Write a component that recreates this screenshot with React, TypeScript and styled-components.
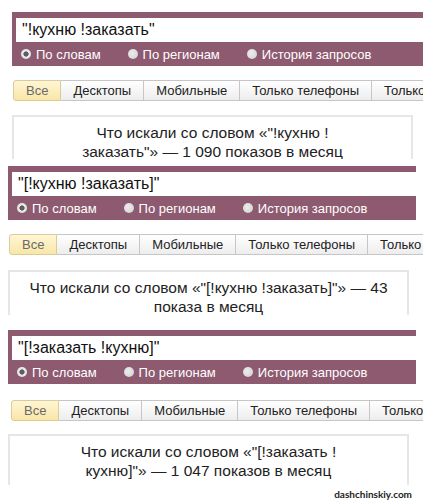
import styled, { createGlobalStyle } from "styled-components";

const GlobalStyle = createGlobalStyle`
  html, body {
    margin: 0;
    padding: 0;
    background: #fff;
  }
  body {
    font-family: "Liberation Sans", Arial, sans-serif;
    width: 423px;
    height: 501px;
    overflow: hidden;
  }
`;

type ShotData = {
  query: string;
  line1: string;
  line2: string;
  top: number;
  left: number;
  height: number;
  barWidth: number;
  tabsLeft: number;
  barBottomGap: number;
  tabsBottomGap: number;
};

const shots: ShotData[] = [
  {
    query: '"!кухню !заказать"',
    line1: "Что искали со словом «\"!кухню !",
    line2: "заказать\"» — 1 090 показов в месяц",
    top: 12,
    left: 12,
    height: 147,
    barWidth: 420,
    tabsLeft: 1,
    barBottomGap: 14,
    tabsBottomGap: 14,
  },
  {
    query: '"[!кухню !заказать]"',
    line1: "Что искали со словом «\"[!кухню !заказать]\"» — 43",
    line2: "показа в месяц",
    top: 7,
    left: 8,
    height: 149,
    barWidth: 408,
    tabsLeft: 1,
    barBottomGap: 14,
    tabsBottomGap: 15,
  },
  {
    query: '"[!заказать !кухню]"',
    line1: "Что искали со словом «\"[!заказать !",
    line2: "кухню]\"» — 1 047 показов в месяц",
    top: 15,
    left: 8,
    height: 155,
    barWidth: 408,
    tabsLeft: 3,
    barBottomGap: 16,
    tabsBottomGap: 13,
  },
];

const tabs = ["Все", "Десктопы", "Мобильные", "Только телефоны", "Только планшеты"];
const modes = ["По словам", "По регионам", "История запросов"];

const App = () => {
  return (
    <>
      <GlobalStyle />
      <Page>
        {shots.map((s) => (
          <Shot
            key={s.query}
            $top={s.top}
            $left={s.left}
            $height={s.height}
          >
            <SearchBar $width={s.barWidth}>
              <QueryField>{s.query}</QueryField>
              <Modes>
                {modes.map((m, i) => (
                  <Mode key={m}>
                    <Radio $checked={i === 0} />
                    {m}
                  </Mode>
                ))}
              </Modes>
            </SearchBar>
            <Tabs $left={s.tabsLeft} $top={s.barBottomGap} $bottom={s.tabsBottomGap}>
              {tabs.map((t, i) => (
                <Tab key={t} $active={i === 0}>
                  {t}
                </Tab>
              ))}
            </Tabs>
            <ResultBox>
              <p>{s.line1}</p>
              <p>{s.line2}</p>
            </ResultBox>
          </Shot>
        ))}
        <Watermark>dashchinskiy.com</Watermark>
      </Page>
    </>
  );
};

const Page = styled.div`
  width: 423px;
  height: 501px;
  display: flex;
  flex-direction: column;
  overflow: hidden;
`;

const Shot = styled.section<{ $top: number; $left: number; $height: number }>`
  margin-top: ${(p) => p.$top}px;
  padding-left: ${(p) => p.$left}px;
  height: ${(p) => p.$height}px;
  width: ${(p) => 423 - p.$left}px;
  overflow: hidden;
  flex-shrink: 0;
  display: flex;
  flex-direction: column;
`;

const SearchBar = styled.div<{ $width: number }>`
  background: #8e5a6f;
  width: ${(p) => p.$width}px;
  padding: 6px 0 0 4px;
  box-sizing: border-box;
  height: 54px;
  flex-shrink: 0;
`;

const QueryField = styled.div`
  background: #fff;
  height: 24px;
  line-height: 24px;
  font-size: 16px;
  color: #111;
  padding-left: 6px;
  white-space: nowrap;
`;

const Modes = styled.div`
  display: flex;
  align-items: center;
  height: 24px;
  padding-left: 5px;
  gap: 27px;
`;

const Mode = styled.span`
  display: inline-flex;
  align-items: center;
  gap: 5px;
  color: #fff;
  font-size: 13px;
  white-space: nowrap;
`;

const Radio = styled.span<{ $checked: boolean }>`
  width: 10px;
  height: 10px;
  border-radius: 50%;
  box-sizing: border-box;
  background: ${(p) =>
    p.$checked
      ? "radial-gradient(circle, #5e5e5e 0 2.3px, #e6e6e6 2.9px)"
      : "radial-gradient(circle at 40% 40%, #ececec, #d0d0d0)"};
  flex-shrink: 0;
`;

const Tabs = styled.div<{ $left: number; $top: number; $bottom: number }>`
  display: flex;
  margin: ${(p) => p.$top}px 0 ${(p) => p.$bottom}px ${(p) => p.$left}px;
  height: 21px;
  flex-shrink: 0;
`;

const Tab = styled.div<{ $active: boolean }>`
  flex-shrink: 0;
  height: 21px;
  box-sizing: border-box;
  padding: 0 12px;
  line-height: 19px;
  font-size: 13px;
  white-space: nowrap;
  color: ${(p) => (p.$active ? "#6a6a6a" : "#222")};
  border: 1px solid ${(p) => (p.$active ? "#d9cc98" : "#c6c6c6")};
  border-left-width: ${(p) => (p.$active ? 1 : 0)}px;
  border-radius: ${(p) => (p.$active ? "3px 0 0 3px" : "0")};
  background: ${(p) =>
    p.$active
      ? "linear-gradient(#fff6d6, #f9e6a6)"
      : "linear-gradient(#ffffff, #ededed)"};
`;

const ResultBox = styled.div`
  width: 401px;
  box-sizing: border-box;
  flex: 1;
  border: 2px solid #e6e6e6;
  border-bottom: none;
  padding-top: 6px;
  text-align: center;
  font-size: 15.5px;
  color: #222;
  p {
    margin: 0;
    line-height: 19px;
    white-space: nowrap;
  }
`;

const Watermark = styled.div`
  align-self: flex-end;
  margin: 3px 11px 0 0;
  font-family: Lato, "Open Sans", sans-serif;
  font-weight: bold;
  font-size: 10px;
  color: #222;
`;

export default App;
